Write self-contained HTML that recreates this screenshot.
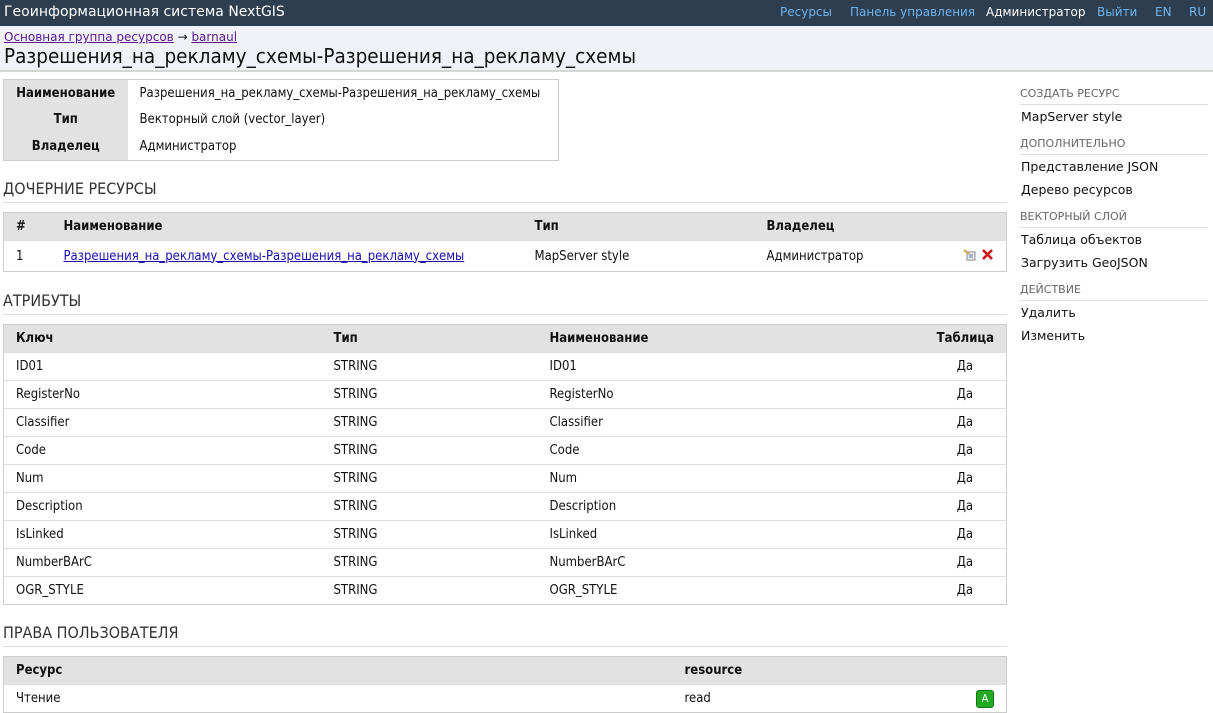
<!DOCTYPE html>
<html><head><meta charset="utf-8"><style>
*{margin:0;padding:0;box-sizing:border-box}
body{width:1213px;height:701px;overflow:hidden;background:#fff;font-family:"DejaVu Sans Condensed","DejaVu Sans",sans-serif;font-size:13px;color:#111}
.top{height:26px;background:#2d3e50;color:#fff;font-family:"DejaVu Sans",sans-serif;font-size:12px;position:relative}
.top .t{position:absolute;left:4px;top:4px;font-size:14px}
.top a{position:absolute;top:5px;color:#6fb3ec;text-decoration:none}
.sub{height:46px;background:#f1f2f7;border-bottom:2px solid #d6d6d6;padding-left:4px}
.bc{padding-top:4px;font-family:"DejaVu Sans",sans-serif;font-size:12px}
.bc a{color:#551a8b;text-decoration:underline}
h1{font-weight:normal;font-size:20.5px;line-height:24px;margin-top:0px}
.abs{position:absolute}
table{border-collapse:collapse;border:1px solid #ccc}
td,th{text-align:left;padding:0 12px;font-size:13px}
th{background:#e2e2e2;font-weight:bold}
h2{position:absolute;left:3px;font-weight:normal;font-size:16px;color:#333;width:1004px;border-bottom:1px solid #ddd;padding-bottom:4px}
.lt tr{height:28px}
.lt td{border-top:1px solid #ddd}
.side{position:absolute;left:1020px;top:78px;width:188px;font-family:"DejaVu Sans",sans-serif}
.side .h{font-size:11px;color:#666;border-bottom:1px solid #ddd;height:18px;line-height:14px;margin-top:9px}
.side .i{font-size:12.5px;height:23px;line-height:23px;padding-left:1px;color:#111}
</style></head><body>
<div class="top"><span class="t">Геоинформационная система NextGIS</span>
<a style="left:780px">Ресурсы</a><a style="left:850px">Панель управления</a><a style="left:986px;color:#fff">Администратор</a><a style="left:1097px">Выйти</a><a style="left:1155px">EN</a><a style="left:1189px">RU</a></div>
<div class="sub"><div class="bc"><a>Основная группа ресурсов</a> → <a>barnaul</a></div><h1>Разрешения_на_рекламу_схемы-Разрешения_на_рекламу_схемы</h1></div>

<table class="abs" style="left:3px;top:79px;width:556px;height:82px">
<tr><th style="width:124px;text-align:center">Наименование</th><td>Разрешения_на_рекламу_схемы-Разрешения_на_рекламу_схемы</td></tr>
<tr><th style="text-align:center">Тип</th><td>Векторный слой (vector_layer)</td></tr>
<tr><th style="text-align:center">Владелец</th><td>Администратор</td></tr></table>

<h2 style="top:179px">ДОЧЕРНИЕ РЕСУРСЫ</h2>
<table class="abs lt" style="left:3px;top:212px;width:1004px">
<tr><th style="width:48px">#</th><th style="width:471px">Наименование</th><th style="width:232px">Тип</th><th>Владелец</th><th></th></tr>
<tr style="height:31px"><td>1</td><td><a style="color:#1a0dab;text-decoration:underline">Разрешения_на_рекламу_схемы-Разрешения_на_рекламу_схемы</a></td><td>MapServer style</td><td>Администратор</td><td style="text-align:right;white-space:nowrap"><svg width="14" height="12" viewBox="0 0 14 12"><rect x="4" y="3" width="8" height="8" fill="#eee" stroke="#888"/><path d="M6 6h4M6 8h4" stroke="#57a"/><path d="M1 1l5 4" stroke="#c9a24a" stroke-width="2"/></svg> <svg width="13" height="13" viewBox="0 0 13 13"><path d="M2 2l9 9M11 2l-9 9" stroke="#d01010" stroke-width="2.5"/></svg></td></tr></table>

<h2 style="top:291px">АТРИБУТЫ</h2>
<table class="abs lt" style="left:3px;top:324px;width:1004px">
<tr><th style="width:318px">Ключ</th><th style="width:216px">Тип</th><th>Наименование</th><th style="text-align:right">Таблица</th></tr>
<tr><td>ID01</td><td>STRING</td><td>ID01</td><td style="text-align:right;padding-right:33px">Да</td></tr>
<tr><td>RegisterNo</td><td>STRING</td><td>RegisterNo</td><td style="text-align:right;padding-right:33px">Да</td></tr>
<tr><td>Classifier</td><td>STRING</td><td>Classifier</td><td style="text-align:right;padding-right:33px">Да</td></tr>
<tr><td>Code</td><td>STRING</td><td>Code</td><td style="text-align:right;padding-right:33px">Да</td></tr>
<tr><td>Num</td><td>STRING</td><td>Num</td><td style="text-align:right;padding-right:33px">Да</td></tr>
<tr><td>Description</td><td>STRING</td><td>Description</td><td style="text-align:right;padding-right:33px">Да</td></tr>
<tr><td>IsLinked</td><td>STRING</td><td>IsLinked</td><td style="text-align:right;padding-right:33px">Да</td></tr>
<tr><td>NumberBArC</td><td>STRING</td><td>NumberBArC</td><td style="text-align:right;padding-right:33px">Да</td></tr>
<tr><td>OGR_STYLE</td><td>STRING</td><td>OGR_STYLE</td><td style="text-align:right;padding-right:33px">Да</td></tr></table>

<h2 style="top:623px">ПРАВА ПОЛЬЗОВАТЕЛЯ</h2>
<table class="abs lt" style="left:3px;top:656px;width:1004px">
<tr><th style="width:669px">Ресурс</th><th>resource</th><th></th></tr>
<tr><td>Чтение</td><td>read</td><td style="text-align:right"><span style="display:inline-block;width:18px;height:18px;background:#22aa22;border:1px solid #117711;border-radius:3px;color:#fff;font-size:11px;text-align:center;line-height:16px">A</span></td></tr></table>

<div class="side">
<div class="h">СОЗДАТЬ РЕСУРС</div><div class="i">MapServer style</div>
<div class="h">ДОПОЛНИТЕЛЬНО</div><div class="i">Представление JSON</div><div class="i">Дерево ресурсов</div>
<div class="h">ВЕКТОРНЫЙ СЛОЙ</div><div class="i">Таблица объектов</div><div class="i">Загрузить GeoJSON</div>
<div class="h">ДЕЙСТВИЕ</div><div class="i">Удалить</div><div class="i">Изменить</div>
</div>
</body></html>
